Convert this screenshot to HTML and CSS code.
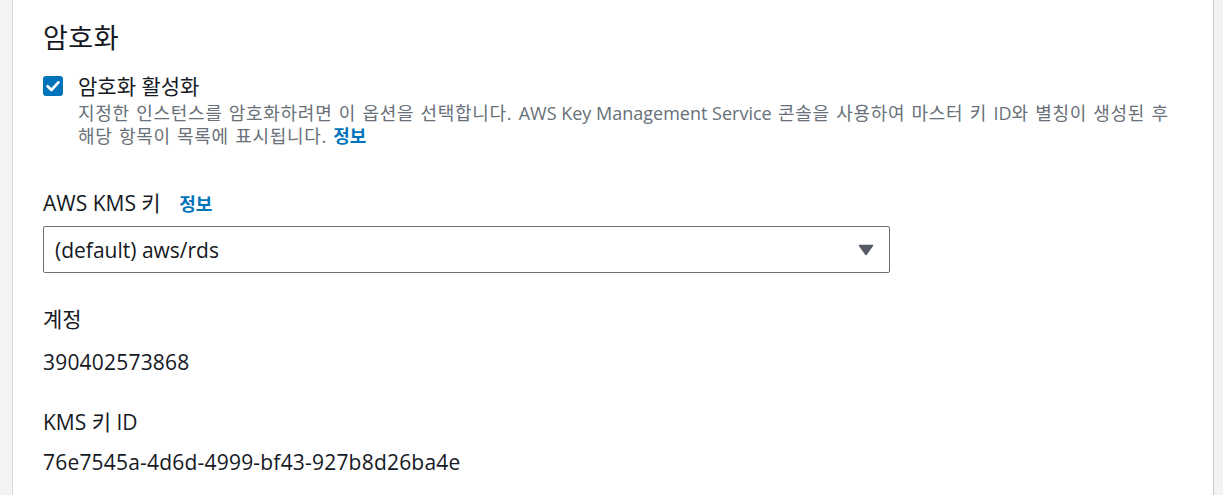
FILE: index.html
```html
<!DOCTYPE html>
<html lang="ko">
<head>
<meta charset="utf-8">
<title>암호화</title>
<link rel="stylesheet" href="styles.css">
</head>
<body>
<div class="page">
  <section class="panel">
    <h2 class="title">암호화</h2>
    <div class="check-row">
      <span class="checkbox">
        <svg viewBox="0 0 20 20" width="20" height="20" aria-hidden="true"><path d="M4.6 10.2 L8.4 14 L15.4 6.4" fill="none" stroke="#fff" stroke-width="2.8" stroke-linecap="round" stroke-linejoin="round"/></svg>
      </span>
      <div class="check-text">
        <div class="check-label">암호화 활성화</div>
        <div class="check-desc">지정한 인스턴스를 암호화하려면 이 옵션을 선택합니다. <span class="latin">AWS Key Management Service</span> 콘솔을 사용하여 마스터 키 <span class="latin">ID</span>와 별칭이 생성된 후 해당 항목이 목록에 표시됩니다. <a class="info" href="#">정보</a></div>
      </div>
    </div>

    <div class="field kms">
      <div class="field-label">AWS KMS 키 <a class="info info-gap" href="#">정보</a></div>
      <div class="select">
        <span class="select-value">(default) aws/rds</span>
        <svg class="caret" viewBox="0 0 16 12" width="16" height="12" aria-hidden="true"><path d="M1.5 1.5 H14.5 L8 10.5 Z" fill="#545b64" stroke="#545b64" stroke-width="1.5" stroke-linejoin="round"/></svg>
      </div>
    </div>

    <div class="field account">
      <div class="field-label">계정</div>
      <div class="field-value">390402573868</div>
    </div>

    <div class="field keyid">
      <div class="field-label">KMS 키 ID</div>
      <div class="field-value">76e7545a-4d6d-4999-bf43-927b8d26ba4e</div>
    </div>
  </section>
</div>
</body>
</html>
```

FILE: styles.css
```css
html, body {
  margin: 0;
  padding: 0;
  height: 100%;
  background: #f2f3f3;
}
body {
  font-family: "Open Sans", "Noto Sans CJK KR", sans-serif;
  color: #16191f;
  font-size: 21px;
  line-height: 28px;
}
.page {
  height: 100%;
  padding: 0 9px 0 12px;
  box-sizing: border-box;
}
.panel {
  height: 100%;
  box-sizing: border-box;
  background: #fff;
  border-left: 1px solid #d5dbdb;
  border-right: 1px solid #c6cccc;
  padding: 22px 30px 0 30px;
}
.title {
  margin: 0;
  font-size: 27px;
  line-height: 31px;
  font-weight: 400;
  letter-spacing: 0.5px;
}
.check-row {
  display: flex;
  gap: 15px;
  margin-top: 19px;
}
.checkbox {
  flex: none;
  width: 20px;
  height: 20px;
  margin-top: 4px;
  border-radius: 3px;
  background: #0073bb;
  display: flex;
}
.check-label {
  line-height: 28px;
}
.check-desc {
  margin-top: 2px;
  font-size: 18px;
  line-height: 23px;
  letter-spacing: 0.7px;
  word-spacing: 1px;
  word-break: keep-all;
  color: #687078;
}
.latin {
  letter-spacing: 0;
  word-spacing: 0;
}
.info {
  color: #0073bb;
  font-weight: 700;
  text-decoration: none;
}
.check-desc .info {
  letter-spacing: 0;
}
.info-gap {
  margin-left: 13px;
  font-size: 18px;
}
.field-label {
  line-height: 28px;
}
.kms {
  margin-top: 41px;
}
.select {
  margin-top: 8px;
  width: 847px;
  height: 47px;
  box-sizing: border-box;
  border: 1px solid #687078;
  border-radius: 2px;
  display: flex;
  align-items: center;
  justify-content: space-between;
  padding: 0 15px 0 11px;
}
.select-value {
  line-height: 28px;
}
.caret {
  display: block;
}
.account {
  margin-top: 32px;
}
.field-value {
  margin-top: 15px;
  letter-spacing: 0.2px;
}
.keyid {
  margin-top: 32px;
}
.keyid .field-value {
  margin-top: 12px;
}
```
